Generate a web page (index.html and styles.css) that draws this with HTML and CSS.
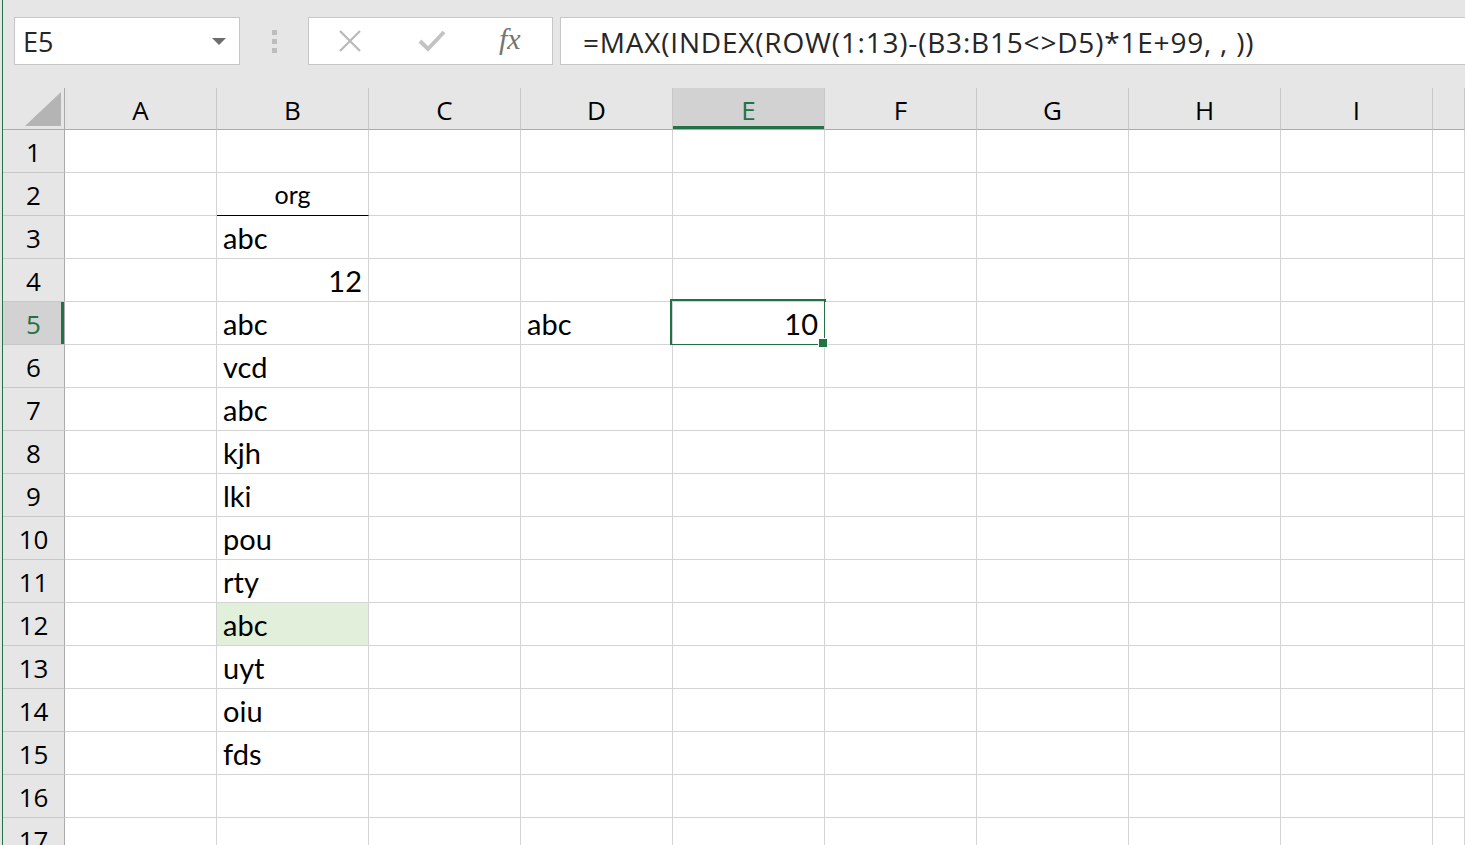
FILE: index.html
```html
<!DOCTYPE html>
<html lang="en">
<head>
    <meta charset="UTF-8">
    <title>Sheet1</title>
    <link rel="stylesheet" href="styles.css">
</head>
<body>

    <div class="app">

        <!-- Formula bar -->
        <div class="formula-bar">
            <div class="name-box">
                <span>E5</span>
                <svg class="caret" width="14" height="8" viewBox="0 0 14 8"><path d="M0 0 H14 L7 7 Z" fill="#6d6d6d"/></svg>
            </div>
            <div class="grip"><i></i><i></i><i></i></div>
            <div class="fx-buttons">
                <svg class="btn-icon" width="24" height="24" viewBox="0 0 24 24">
                    <path d="M2 2 L22 22 M22 2 L2 22" stroke="#b9b9b9" stroke-width="2.2" fill="none"/>
                </svg>
                <svg class="btn-icon" width="28" height="24" viewBox="0 0 28 24">
                    <path d="M2 12 L10 20 L26 3" stroke="#c3c3c3" stroke-width="4" fill="none"/>
                </svg>
                <span class="fx">fx</span>
            </div>
            <div class="formula-input">=MAX(INDEX(ROW(1:13)-(B3:B15&lt;&gt;D5)*1E+99, , ))</div>
        </div>

        <!-- Grid -->
        <div class="sheet" id="sheet"></div>
    </div>

    <script>
        const cols = ["A", "B", "C", "D", "E", "F", "G", "H", "I", ""];
        const cells = {
            B2: { text: "org", cls: "center small underline" },
            B3: { text: "abc" },
            B4: { text: "12", cls: "num" },
            B5: { text: "abc" },
            B6: { text: "vcd" },
            B7: { text: "abc" },
            B8: { text: "kjh" },
            B9: { text: "lki" },
            B10: { text: "pou" },
            B11: { text: "rty" },
            B12: { text: "abc", cls: "fill-green" },
            B13: { text: "uyt" },
            B14: { text: "oiu" },
            B15: { text: "fds" },
            D5: { text: "abc" },
            E5: { text: "10", cls: "num selected" }
        };
        const activeCol = "E";
        const activeRow = 5;

        const sheet = document.getElementById("sheet");

        function add(cls, text) {
            let div = document.createElement("div");
            div.className = cls;
            if (text) div.textContent = text;
            sheet.appendChild(div);
            return div;
        }

        let corner = add("corner");
        corner.innerHTML = '<svg width="61" height="41" viewBox="0 0 61 41"><path d="M58 4 V38 H22 Z" fill="#b4b4b4"/></svg>';

        cols.forEach(c => add("col-head" + (c === activeCol ? " active" : ""), c));

        for (let r = 1; r <= 17; r++) {
            add("row-head" + (r === activeRow ? " active" : ""), String(r));
            cols.forEach(c => {
                let cell = cells[c + r];
                add("cell " + (cell && cell.cls ? cell.cls : ""), cell ? cell.text : "");
            });
        }
    </script>

</body>
</html>
```

FILE: styles.css
```css
* {
    margin: 0;
    padding: 0;
    box-sizing: border-box;
}

html, body {
    height: 100%;
    overflow: hidden;
}

body {
    background: #e6e6e6;
    font-family: Lato, "Liberation Sans", sans-serif;
    color: #000;
}

.app {
    margin-left: 2px;
    border-left: 1px solid #217346;
    height: 100%;
}

/* Formula bar */
.formula-bar {
    height: 88px;
    display: flex;
    align-items: flex-start;
    padding: 17px 0 0 11px;
}

.name-box {
    width: 226px;
    height: 48px;
    background: #fff;
    border: 1px solid #c6c6c6;
    display: flex;
    align-items: center;
    justify-content: space-between;
    padding: 0 13px 0 8px;
    font-family: "Open Sans", sans-serif;
    font-size: 27px;
    color: #262626;
}

.caret {
    margin-top: 2px;
}

.grip {
    width: 68px;
    height: 48px;
    display: flex;
    flex-direction: column;
    align-items: center;
    justify-content: center;
    gap: 4px;
}

.grip i {
    display: block;
    width: 5px;
    height: 5px;
    background: #bdbdbd;
}

.fx-buttons {
    width: 245px;
    height: 48px;
    background: #fff;
    border: 1px solid #c6c6c6;
    display: flex;
    align-items: center;
    padding-left: 29px;
    gap: 56px;
}

.fx {
    font-family: "Liberation Serif", serif;
    font-style: italic;
    font-size: 30px;
    color: #747474;
    margin-left: -3px;
    margin-top: -4px;
}

.formula-input {
    flex: 1;
    margin-left: 7px;
    height: 48px;
    background: #fff;
    border: 1px solid #c6c6c6;
    border-right: none;
    padding: 5px 0 0 22px;
    font-family: "Open Sans", sans-serif;
    font-size: 28px;
    letter-spacing: 0.8px;
    color: #262626;
    white-space: nowrap;
}

/* Sheet grid */
.sheet {
    display: grid;
    grid-template-columns: 62px repeat(9, 152px) 1fr;
    grid-template-rows: 42px;
    grid-auto-rows: 43px;
}

.corner {
    border-right: 1px solid #ababab;
    border-bottom: 1px solid #ababab;
}

.corner svg {
    display: block;
}

.col-head {
    border-right: 1px solid #c8c8c8;
    border-bottom: 1px solid #ababab;
    display: flex;
    align-items: center;
    justify-content: center;
    font-family: "Open Sans", sans-serif;
    font-size: 26px;
    padding-top: 2px;
}

.col-head.active {
    background: #d2d2d2;
    color: #217346;
    box-shadow: inset 0 -3px 0 #217346;
}

.row-head {
    background: #e6e6e6;
    border-right: 1px solid #ababab;
    border-bottom: 1px solid #c8c8c8;
    display: flex;
    align-items: center;
    justify-content: center;
    font-family: "Open Sans", sans-serif;
    font-size: 26px;
    padding-top: 1px;
}

.row-head.active {
    background: #d2d2d2;
    color: #217346;
    box-shadow: inset -3px 0 0 #217346;
}

.cell {
    background: #fff;
    border-right: 1px solid #d4d4d4;
    border-bottom: 1px solid #d4d4d4;
    display: flex;
    align-items: flex-end;
    padding: 0 6px 3px 6px;
    font-size: 29px;
    line-height: 34px;
    white-space: nowrap;
    position: relative;
}

.cell.num {
    justify-content: flex-end;
}

.cell.center {
    justify-content: center;
}

.cell.small {
    font-size: 25px;
    padding-bottom: 4px;
}

.cell.underline {
    border-bottom-color: #000;
}

.cell.fill-green {
    background: #e2efda;
}

.cell.selected::after {
    content: "";
    position: absolute;
    top: -3px;
    left: -3px;
    right: -2px;
    bottom: -2px;
    border: 2px solid #217346;
}

.cell.selected::before {
    content: "";
    position: absolute;
    right: -4px;
    bottom: -4px;
    width: 8px;
    height: 8px;
    background: #217346;
    border: 1px solid #fff;
    z-index: 1;
}
```
